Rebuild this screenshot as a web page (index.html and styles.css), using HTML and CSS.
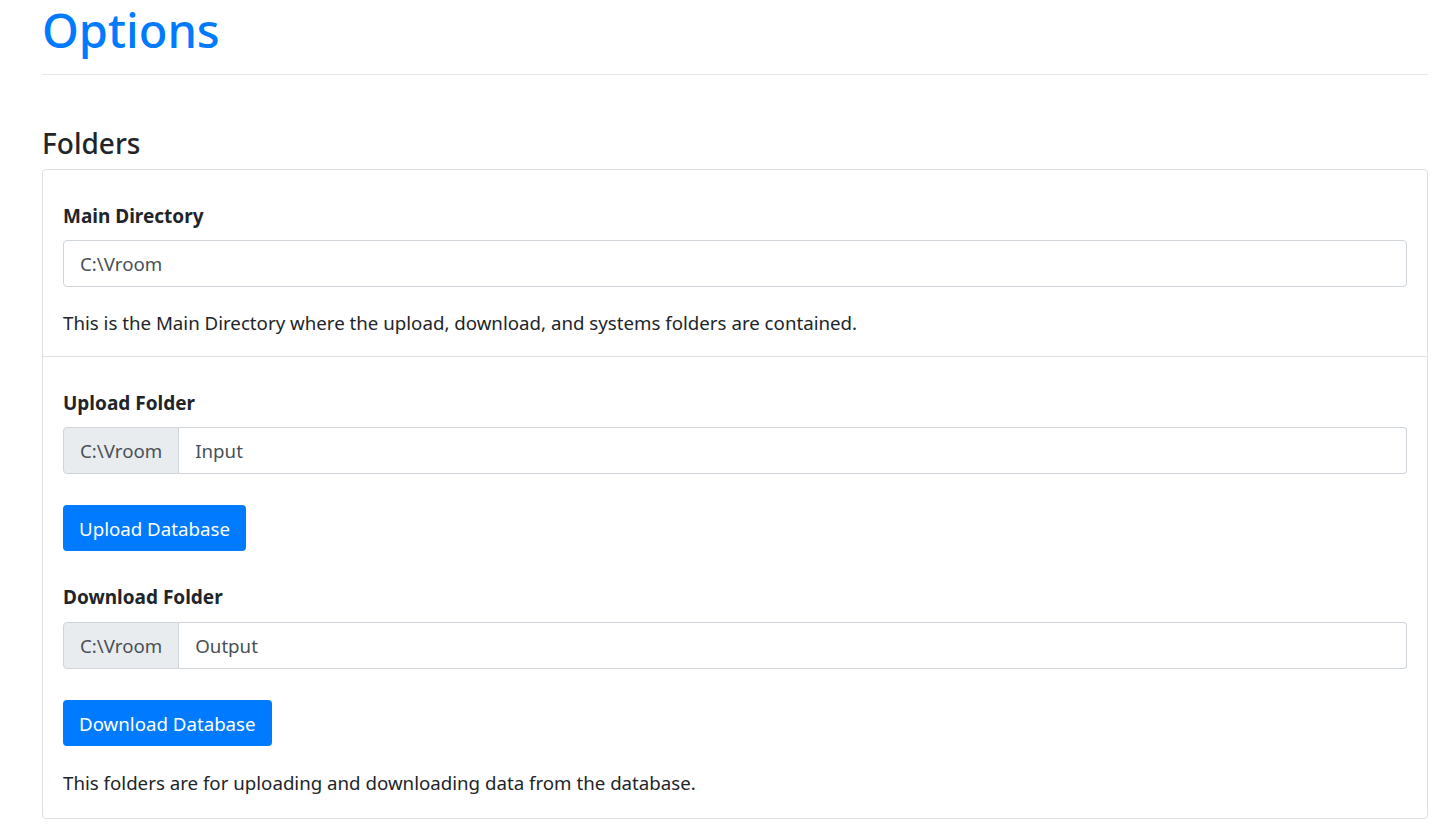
FILE: index.html
```html
<!DOCTYPE html>
<html lang="en">
<head>
<meta charset="utf-8">
<title>Options</title>
<link rel="stylesheet" href="styles.css">
</head>
<body>
<main class="page">
  <h1 class="page-title">Options</h1>
  <hr class="rule">
  <h3 class="section-title">Folders</h3>
  <div class="card">
    <div class="card-section">
      <label class="field-label">Main Directory</label>
      <input class="text-input" type="text" value="C:\Vroom">
      <p class="help">This is the Main Directory where the upload, download, and systems folders are contained.</p>
    </div>
    <div class="card-section last">
      <label class="field-label">Upload Folder</label>
      <div class="input-group">
        <span class="prefix">C:\Vroom</span>
        <input class="group-input" type="text" value="Input">
      </div>
      <button class="btn">Upload Database</button>
      <label class="field-label next">Download Folder</label>
      <div class="input-group">
        <span class="prefix">C:\Vroom</span>
        <input class="group-input" type="text" value="Output">
      </div>
      <button class="btn">Download Database</button>
      <p class="help">This folders are for uploading and downloading data from the database.</p>
    </div>
  </div>
</main>
</body>
</html>
```

FILE: styles.css
```css
* { box-sizing: border-box; }
html, body { margin: 0; padding: 0; background: #fff; }
body {
  font-family: "Noto Sans", "Open Sans", sans-serif;
  font-size: 18.7px;
  color: #212529;
}
.page {
  padding: 0 15px 0 42px;
}
.page-title {
  margin: 0;
  padding-top: 0;
  font-size: 47px;
  font-weight: 500;
  line-height: 60px;
  color: #007bff;
}
.rule {
  margin: 14px 0 0 0;
  border: 0;
  border-top: 1px solid #e6e6e6;
  height: 0;
}
.section-title {
  margin: 50px 0 0 0;
  font-size: 28px;
  font-weight: 500;
  line-height: 36px;
  color: #212529;
}
.card {
  margin-top: 8px;
  border: 1px solid #dfdfdf;
  border-radius: 4px;
  display: flex;
  flex-direction: column;
}
.card-section {
  padding: 33px 20px 20px 20px;
  display: flex;
  flex-direction: column;
  align-items: flex-start;
}
.card-section + .card-section {
  border-top: 1px solid #dfdfdf;
}
.card-section.last {
  padding-bottom: 22px;
}
.field-label {
  display: block;
  font-size: 19px;
  font-weight: 700;
  line-height: 27px;
  margin-bottom: 10px;
}
.field-label.next { margin-top: 33px; margin-bottom: 11px; }
.text-input, .group-input {
  font-family: inherit;
  font-size: 18.7px;
  color: #495057;
  height: 47px;
  padding: 0 16px;
  border: 1px solid #ced4da;
  background: #fff;
  outline: none;
}
.text-input {
  width: 100%;
  border-radius: 4px;
}
.input-group {
  display: flex;
  width: 100%;
  height: 47px;
}
.prefix {
  display: flex;
  align-items: center;
  padding: 0 16px;
  background: #e9ecef;
  border: 1px solid #ced4da;
  border-radius: 4px 0 0 4px;
  color: #495057;
  white-space: nowrap;
}
.group-input {
  flex: 1;
  border-left: 0;
  border-radius: 0 4px 4px 0;
}
.btn {
  margin-top: 31px;
  height: 46px;
  padding: 0 16px;
  border: 0;
  border-radius: 4px;
  background: #007bff;
  color: #fff;
  font-family: inherit;
  font-size: 18.7px;
}
.help {
  margin: 22px 0 0 0;
  line-height: 27px;
}
.last .help {
  margin-top: 23px;
}
```
